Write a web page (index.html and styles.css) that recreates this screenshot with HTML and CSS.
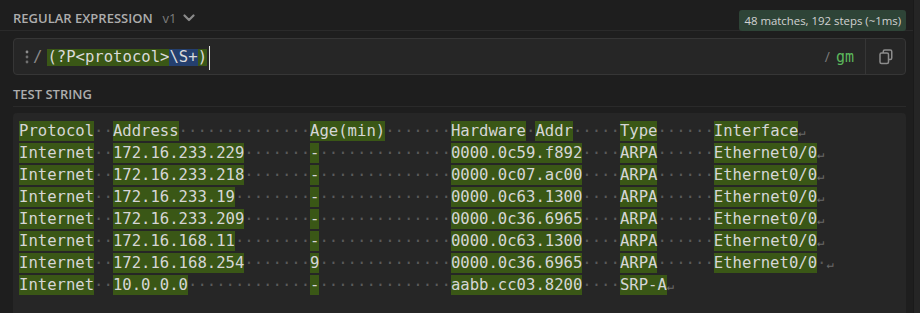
FILE: index.html
```html
<!DOCTYPE html>
<html lang="en">
<head>
<meta charset="utf-8">
<title>Regex</title>
<link rel="stylesheet" href="styles.css">
</head>
<body>
<div class="app">
  <main class="main">
    <header class="re-head">
      <div class="title">REGULAR EXPRESSION<span class="ver">v1<svg class="chev" width="12" height="8" viewBox="0 0 12 8"><polyline points="1.5,1.5 6,6 10.5,1.5" fill="none" stroke="#8a8a8a" stroke-width="2.2" stroke-linecap="round" stroke-linejoin="round"/></svg></span></div>
      <div class="badge">48 matches, 192 steps (~1ms)</div>
    </header>

    <div class="re-box">
      <svg class="handle" width="4" height="14" viewBox="0 0 4 14"><circle cx="2" cy="2" r="1.4" fill="#8e8e8e"/><circle cx="2" cy="7" r="1.4" fill="#707070"/><circle cx="2" cy="12" r="1.4" fill="#707070"/></svg>
      <span class="delim">/</span>
      <div class="re-input"><span class="rm">(?P&lt;protocol&gt;</span><span class="rm rm2">\S+</span><span class="rm">)</span><span class="cursor"></span></div>
      <div class="flags"><span class="delim2">/</span><span class="fl">gm</span></div>
      <div class="copy">
        <svg width="14" height="16" viewBox="0 0 14 16"><rect x="4.25" y="1" width="8.5" height="9.5" rx="1.5" fill="none" stroke="#8c8c8c" stroke-width="1.5"/><rect x="1" y="4" width="8.5" height="10.5" rx="1.5" fill="#262626" stroke="#8c8c8c" stroke-width="1.5"/></svg>
      </div>
    </div>

    <div class="ts-head">TEST STRING</div>

    <div class="ts-panel">
      <div class="line"><span class="m">Protocol</span><span class="ws">··</span><span class="m">Address</span><span class="ws">··············</span><span class="m">Age(min)</span><span class="ws">·······</span><span class="m">Hardware</span><span class="ws">·</span><span class="m">Addr</span><span class="ws">·····</span><span class="m">Type</span><span class="ws">······</span><span class="m">Interface</span><span class="nl">↵</span></div>
      <div class="line"><span class="m">Internet</span><span class="ws">··</span><span class="m">172.16.233.229</span><span class="ws">·······</span><span class="m">-</span><span class="ws">··············</span><span class="m">0000.0c59.f892</span><span class="ws">····</span><span class="m">ARPA</span><span class="ws">······</span><span class="m">Ethernet0/0</span><span class="nl">↵</span></div>
      <div class="line"><span class="m">Internet</span><span class="ws">··</span><span class="m">172.16.233.218</span><span class="ws">·······</span><span class="m">-</span><span class="ws">··············</span><span class="m">0000.0c07.ac00</span><span class="ws">····</span><span class="m">ARPA</span><span class="ws">······</span><span class="m">Ethernet0/0</span><span class="nl">↵</span></div>
      <div class="line"><span class="m">Internet</span><span class="ws">··</span><span class="m">172.16.233.19</span><span class="ws">········</span><span class="m">-</span><span class="ws">··············</span><span class="m">0000.0c63.1300</span><span class="ws">····</span><span class="m">ARPA</span><span class="ws">······</span><span class="m">Ethernet0/0</span><span class="nl">↵</span></div>
      <div class="line"><span class="m">Internet</span><span class="ws">··</span><span class="m">172.16.233.209</span><span class="ws">·······</span><span class="m">-</span><span class="ws">··············</span><span class="m">0000.0c36.6965</span><span class="ws">····</span><span class="m">ARPA</span><span class="ws">······</span><span class="m">Ethernet0/0</span><span class="nl">↵</span></div>
      <div class="line"><span class="m">Internet</span><span class="ws">··</span><span class="m">172.16.168.11</span><span class="ws">········</span><span class="m">-</span><span class="ws">··············</span><span class="m">0000.0c63.1300</span><span class="ws">····</span><span class="m">ARPA</span><span class="ws">······</span><span class="m">Ethernet0/0</span><span class="nl">↵</span></div>
      <div class="line"><span class="m">Internet</span><span class="ws">··</span><span class="m">172.16.168.254</span><span class="ws">·······</span><span class="m">9</span><span class="ws">··············</span><span class="m">0000.0c36.6965</span><span class="ws">····</span><span class="m">ARPA</span><span class="ws">······</span><span class="m">Ethernet0/0</span><span class="ws">·</span><span class="nl">↵</span></div>
      <div class="line"><span class="m">Internet</span><span class="ws">··</span><span class="m">10.0.0.0</span><span class="ws">·············</span><span class="m">-</span><span class="ws">··············</span><span class="m">aabb.cc03.8200</span><span class="ws">····</span><span class="m">SRP-A</span><span class="nl">↵</span></div>
    </div>
  </main>
  <aside class="rail"></aside>
</div>
</body>
</html>
```

FILE: styles.css
```css
* { box-sizing: border-box; }

html, body {
  margin: 0;
  background: #1e1e1e;
  font-family: "Open Sans", "Liberation Sans", sans-serif;
  overflow: hidden;
}

.app {
  display: flex;
  height: 313px;
}

.main {
  flex: 1;
  min-width: 0;
}

.rail {
  width: 7px;
  background: #252525;
  border-left: 1px solid #1a1a1a;
}

/* header */
.re-head {
  display: flex;
  justify-content: space-between;
  height: 31px;
  padding: 6px 7px 0 13px;
  border-bottom: 1px solid #2a2a2a;
}

.title {
  align-self: center;
  display: flex;
  align-items: center;
  font-size: 13px;
  font-weight: 600;
  color: #adadad;
}

.ver {
  display: flex;
  align-items: center;
  margin-left: 10px;
  font-weight: 400;
  color: #7c7c7c;
}

.chev { margin-left: 6px; }

.badge {
  align-self: flex-end;
  margin-bottom: -1px;
  height: 21px;
  line-height: 21px;
  padding: 0 5px;
  border-radius: 3px;
  background: #2e4437;
  color: #d2d2d2;
  font-size: 11.4px;
}

/* regex box */
.re-box {
  display: flex;
  align-items: center;
  height: 37px;
  margin: 7px 7px 0 13px;
  border: 1px solid #363636;
  border-radius: 4px;
  background: #262626;
  font-family: "DejaVu Sans Mono", monospace;
  font-size: 15.6px;
}

.handle { margin-left: 11px; }

.delim {
  margin-left: 4px;
  color: #8a8a8a;
}

.re-input {
  flex: 1;
  display: flex;
  align-items: center;
  margin-left: 5px;
  margin-top: 2px;
}

.rm {
  display: inline-block;
  height: 17px;
  line-height: 17px;
  background: #3a5716;
  color: #dadada;
  white-space: pre;
}

.rm2 { background: #243f6e; }

.cursor {
  width: 1px;
  height: 24px;
  margin-left: 2px;
  background: #e0e0e0;
}

.flags {
  display: flex;
  align-items: center;
  gap: 6px;
  padding-right: 11px;
}

.delim2 {
  font-family: "Open Sans", sans-serif;
  font-size: 14px;
  color: #7a7a7a;
}

.fl {
  font-size: 15px;
  color: #5cb85c;
}

.copy {
  align-self: stretch;
  width: 40px;
  display: flex;
  align-items: center;
  justify-content: center;
  border-left: 1px solid #363636;
}

/* test string */
.ts-head {
  display: flex;
  align-items: center;
  height: 32px;
  margin: 0 7px 0 13px;
  padding-top: 7px;
  border-bottom: 1px solid #2a2a2a;
  font-size: 13px;
  font-weight: 600;
  color: #adadad;
}

.ts-panel {
  height: 220px;
  margin: 6px 7px 0 13px;
  padding: 7px 6px;
  background: #262626;
  border-radius: 4px 4px 0 0;
  font-family: "DejaVu Sans Mono", monospace;
  font-size: 15.6px;
}

.line {
  height: 22px;
  line-height: 22px;
  white-space: pre;
  color: #d6d6d6;
}

.m {
  display: inline-block;
  vertical-align: top;
  height: 20px;
  line-height: 20px;
  margin-top: 1px;
  background: #3a5716;
}

.ws { color: #5a5a5a; }

.nl {
  color: #6a6a6a;
  font-size: 12px;
}
```
